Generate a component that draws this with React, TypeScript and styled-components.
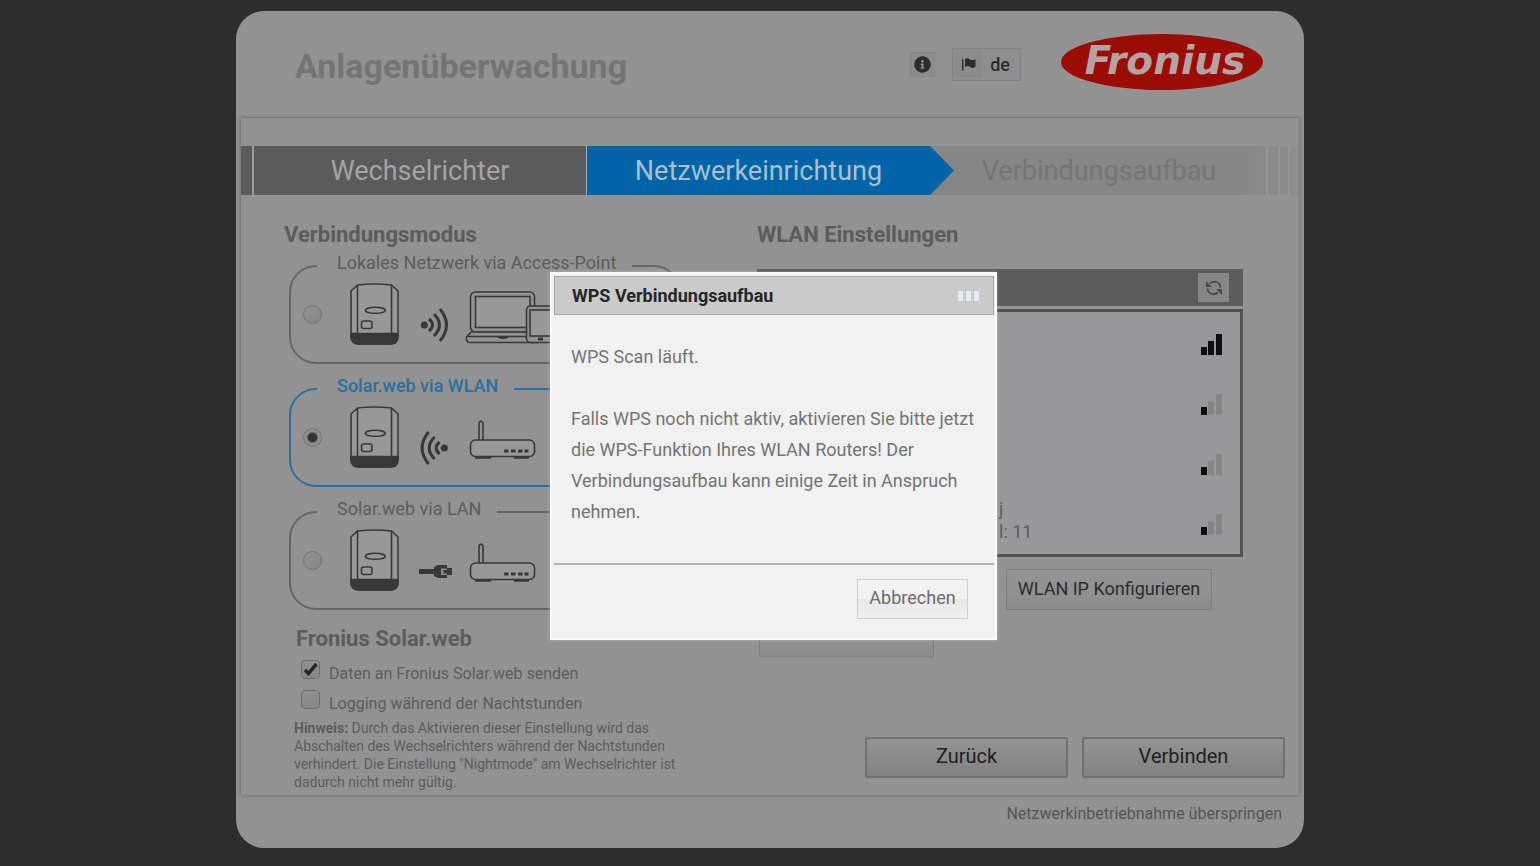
import React from "react";
import styled, { createGlobalStyle, css } from "styled-components";
import { FaInfoCircle } from "react-icons/fa";

const color = {
  page: "#2d2d2d",
  panel: "#929292",
  dark: "#5b5b5b",
  text: "#5c5c5c",
  line: "#666666",
  ink: "#383838",
  blue: "#0064a6",
  blueLine: "#28709f",
};

const GlobalStyle = createGlobalStyle`
  *, *::before, *::after { box-sizing: border-box; }
  body {
    margin: 0;
    background: ${color.page};
    color: ${color.text};
    font-family: Roboto, "Liberation Sans", sans-serif;
    font-size: 16px;
    line-height: 20px;
  }
  h1, h2, p { margin: 0; }
  button, input { font-family: inherit; margin: 0; }
`;

const Page = styled.div`
  position: relative;
  padding: 11px 16px 18px;
`;

const Panel = styled.main`
  max-width: 1068px;
  margin: 0 auto;
  padding: 0 5px;
  background: ${color.panel};
  border-radius: 28px;
`;

const Header = styled.header`
  display: flex;
  align-items: center;
  min-height: 107px;
  padding: 0 36px 0 54px;
`;

const Title = styled.h1`
  flex: 1;
  padding-top: 3px;
  color: #747474;
  font-size: 34px;
  line-height: 40px;
  font-weight: 700;
`;

const IconBox = styled.span`
  display: flex;
  align-items: center;
  justify-content: center;
  width: 25px;
  height: 25px;
  border: 1px solid #868686;
  background: #8c8c8c;
`;

const PlainButton = styled.button`
  display: flex;
  align-items: center;
  padding: 0;
  border: 0;
  background: none;
  color: #2c2c2c;
  font-size: 18px;
`;

const InfoButton = styled(PlainButton)`
  margin-right: 17px;
`;

const LanguageButton = styled(PlainButton)`
  gap: 9px;
  height: 33px;
  padding: 0 10px 0 3px;
  margin-right: 40px;
  border: 1px solid #828282;
  background: #8e8e8e;
  font-weight: 500;
`;

const LogoImage = styled.svg`
  margin-bottom: 5px;
`;

const Content = styled.section`
  padding-top: 28px;
  box-shadow: 0 0 4px rgba(0, 0, 0, 0.36);
`;

const Steps = styled.ol`
  display: grid;
  grid-template-columns: 11px 335fr 367fr 312fr 12px 10px 11px;
  height: 49px;
  margin: 0;
  padding: 0;
  list-style: none;
  background: linear-gradient(90deg, #868686 94%, #8e8e8e);
`;

type StepState = "done" | "current" | "next";

const Step = styled.li<{ $state: StepState }>`
  display: flex;
  align-items: center;
  justify-content: center;
  font-size: 27px;
  ${({ $state }) =>
    $state === "done" &&
    css`
      border-left: 2px solid #9a9a9a;
      border-right: 1px solid #a8a8a8;
      background: ${color.dark};
      color: #a4a4a4;
    `}
  ${({ $state }) =>
    $state === "current" &&
    css`
      padding-right: 24px;
      background: ${color.blue};
      color: #a9c0d0;
      clip-path: polygon(0 0, calc(100% - 24px) 0, 100% 50%, calc(100% - 24px) 100%, 0 100%);
    `}
  ${({ $state }) =>
    $state === "next" &&
    css`
      padding-right: 22px;
      color: #757575;
    `}
`;

const StepEdge = styled.li`
  background: ${color.dark};
`;

const StepTail = styled.li`
  border-left: 2px solid #959595;
`;

const Columns = styled.div`
  display: grid;
  grid-template-columns: minmax(0, 473fr) minmax(0, 528fr);
  padding: 25px 14px 4px 43px;
`;

const Heading = styled.h2<{ $indent?: number }>`
  padding-left: ${({ $indent }) => $indent ?? 0}px;
  font-size: 22px;
  line-height: 30px;
  font-weight: 700;
`;

const ModeList = styled.div`
  display: flex;
  flex-direction: column;
  gap: 12px;
  max-width: 392px;
  margin: 3px 0 14px 5px;
`;

const Mode = styled.fieldset<{ $active: boolean }>`
  min-width: 0;
  height: 111px;
  margin: 0;
  padding: 3px 0 0 12px;
  border: 2px solid ${({ $active }) => ($active ? color.blueLine : color.line)};
  border-radius: 27px;

  legend {
    margin-left: 14px;
    padding: 0 16px 6px 20px;
    color: ${({ $active }) => ($active ? color.blueLine : color.text)};
    font-size: 18px;
    line-height: 20px;
    ${({ $active }) => $active && "font-weight: 500;"}
  }
`;

const ModeBody = styled.div`
  display: flex;
  align-items: center;
  gap: 26px;
`;

const Radio = styled.input.attrs({ type: "radio" })`
  appearance: none;
  flex: none;
  width: 19px;
  height: 19px;
  border: 1px solid #727272;
  border-radius: 50%;
  background: linear-gradient(135deg, #939393, #848484);
  &:checked {
    background: radial-gradient(circle, #333 0 4px, #8f8f8f 6px);
  }
`;

const Checks = styled.div`
  display: flex;
  flex-direction: column;
  gap: 11px;
  padding: 6px 0 10px 17px;
`;

const CheckRow = styled.div`
  display: flex;
  align-items: flex-start;
  gap: 9px;
  height: 19px;
  label {
    padding-top: 4px;
  }
`;

const CheckHolder = styled.span`
  position: relative;
  display: flex;
  svg {
    position: absolute;
    inset: 0;
    pointer-events: none;
  }
`;

const Checkbox = styled.input.attrs({ type: "checkbox" })`
  appearance: none;
  width: 19px;
  height: 19px;
  border: 1px solid #6c6c6c;
  border-radius: 4px;
  background: linear-gradient(#919191, #868686);
`;

const Hint = styled.p`
  max-width: 410px;
  padding-left: 10px;
  font-size: 14px;
  line-height: 18px;
`;

const RightColumn = styled.div`
  display: flex;
  flex-direction: column;
`;

const Networks = styled.div`
  margin-right: 42px;
`;

const ListHead = styled.div`
  display: flex;
  align-items: center;
  justify-content: flex-end;
  height: 37px;
  margin: 19px 0 3px;
  padding-right: 14px;
  background: ${color.dark};
`;

const RefreshButton = styled(PlainButton)`
  justify-content: center;
  width: 31px;
  height: 29px;
  background: #868686;
`;

const NetworkList = styled.ul`
  margin: 0;
  padding: 2px 18px 0 239px;
  height: 248px;
  list-style: none;
  border: 3px solid #515153;
  background: #99989a;
`;

const Network = styled.li`
  display: flex;
  align-items: center;
  justify-content: space-between;
  height: 60px;
  font-size: 18px;
  line-height: 23px;
  p {
    padding-bottom: 8px;
  }
`;

const SoftButton = styled.button<{ $width: number }>`
  width: ${({ $width }) => $width}px;
  height: 41px;
  padding: 0 0 3px;
  border: 1px solid #808080;
  background: linear-gradient(#929292 50%, #8b8b8b);
  color: #2c2c2c;
  font-size: 18px;
`;

const ConfigButtons = styled.div`
  display: flex;
  flex-direction: column;
  gap: 6px;
  padding: 12px 31px 0 2px;
  ${SoftButton}:first-child {
    align-self: flex-end;
  }
`;

const Actions = styled.div`
  display: flex;
  justify-content: flex-end;
  gap: 14px;
  margin: auto 0 13px;
`;

const ActionButton = styled.button`
  width: 203px;
  height: 41px;
  padding: 0 0 4px;
  border: 2px solid #707070;
  border-radius: 2px;
  background: linear-gradient(#939393, #828282);
  color: #1f1f1f;
  font-size: 20px;
`;

const Footer = styled.footer`
  display: flex;
  justify-content: flex-end;
  padding: 9px 17px 24px;
  a {
    color: #555;
    text-decoration: none;
  }
`;

const Overlay = styled.div`
  position: absolute;
  inset: 0;
  display: flex;
  justify-content: center;
  align-items: flex-start;
  padding: 272px 0 0 7px;
`;

const Dialog = styled.div`
  width: 447px;
  padding: 4px 3px 4px 4px;
  background: #f2f1f2;
  box-shadow: inset 0 0 0 2px #fafafa, 0 0 3px rgba(255, 255, 255, 0.35);
`;

const DialogHead = styled.header`
  display: flex;
  align-items: center;
  justify-content: space-between;
  height: 39px;
  padding: 0 14px 0 17px;
  border: 1px solid #a6a6a6;
  background: #cbcbcb;
  color: #262626;
  h2 {
    font-size: 18px;
    font-weight: 700;
  }
`;

const Dots = styled.span`
  display: flex;
  gap: 3px;
  span {
    width: 5px;
    height: 10px;
    background: #e0f1f8;
  }
`;

const DialogBody = styled.div`
  height: 250px;
  padding: 26px 17px 0;
  border-bottom: 2px solid #b4b4b4;
  color: #747474;
  font-size: 18px;
  line-height: 31px;
  p + p {
    margin-top: 31px;
  }
`;

const DialogFoot = styled.footer`
  display: flex;
  justify-content: flex-end;
  padding: 14px 26px 17px;
`;

const CancelButton = styled.button`
  width: 111px;
  height: 40px;
  padding: 0 0 4px;
  border: 1px solid #cfcfcf;
  background: linear-gradient(#f3f2f3 50%, #e9e8e9 50%, #f1f0f1);
  color: #6c6c6c;
  font-size: 18px;
`;

function Logo() {
  return (
    <LogoImage width="202" height="57" viewBox="0 0 202 57" role="img" aria-label="Fronius">
      <ellipse cx="101" cy="28" rx="101" ry="28" fill="#9b0d04" />
      <text
        x="104"
        y="40"
        textAnchor="middle"
        fontFamily="DejaVu Sans, sans-serif"
        fontWeight="700"
        fontStyle="italic"
        fontSize="39"
        fill="#b5a3a3"
      >
        Fronius
      </text>
    </LogoImage>
  );
}

function FlagIcon() {
  return (
    <svg width="14" height="13" viewBox="0 0 14 13" fill="#2c2c2c" aria-hidden="true">
      <path d="M0 1H1.4V12.5H0Z" />
      <path d="M3 1.2C5 -.2 6.500 .2 8 1.500C9.600 2.600 11.500 2.300 13.500 1.200V8.800C11.500 10.300 9.600 10.300 8 9C6.500 7.800 5 7.800 3 9Z" />
    </svg>
  );
}

function RefreshIcon() {
  return (
    <svg width="18" height="16" viewBox="0 0 18 16" aria-hidden="true">
      <g fill="none" stroke="#4a4a4a" strokeWidth="2">
        <path d="M5 3.500C8.500 .5 15 1.500 15.500 7.500" />
        <path d="M13 12.500C9.500 15.500 3 14.500 2.500 8.500" />
      </g>
      <g fill="#4a4a4a">
        <path d="M1 1V7H7Z" />
        <path d="M17 15V9H11Z" />
      </g>
    </svg>
  );
}

function CheckMark() {
  return (
    <svg width="19" height="19" viewBox="0 0 19 19" aria-hidden="true">
      <path d="M4 10L7.500 13.500L15.500 4" fill="none" stroke="#262626" strokeWidth="3.500" />
    </svg>
  );
}

function Signal({ level }: { level: number }) {
  const bars = [
    { x: 0, h: 8 },
    { x: 7, h: 14 },
    { x: 15, h: 21 },
  ];
  return (
    <svg width="21" height="21" viewBox="0 0 21 21" role="img" aria-label={`Signal ${level}`}>
      {bars.map((bar, i) => (
        <rect key={bar.x} x={bar.x} y={21 - bar.h} width="6" height={bar.h} fill={i < level ? "#0e0e10" : "#858485"} />
      ))}
    </svg>
  );
}

function Inverter() {
  return (
    <g>
      <path d="M9.500 3Q26.500 1 43.500 3L50 9V54Q50 62 42 62H11Q3 62 3 54V9Z" fill="#989898" />
      <path d="M9.500 3V51M43.500 3V51" />
      <path d="M3 51.500H50V54Q50 62 42 62H11Q3 62 3 54Z" fill={color.ink} />
      <ellipse cx="27.300" cy="28.300" rx="10" ry="3" />
      <rect x="13.500" y="39" width="10.500" height="7.500" rx="2" />
    </g>
  );
}

function Waves() {
  return (
    <g strokeWidth="3">
      <circle cx="76.300" cy="43" r="3.600" fill={color.ink} stroke="none" />
      <path d="M81 37Q88 43 81 49" />
      <path d="M86 32Q97 43 86 54" />
      <path d="M92 27Q105 43 92 59" />
    </g>
  );
}

function Plug() {
  return (
    <g fill={color.ink} stroke="none">
      <path d="M71 41H86V39L90 37H99V40H104V47H99V50H90L86 48V46H71Z" />
      <path d="M93 40.500H99V42H95.500V45.500H99V47H93Z" fill="#8a8a8a" />
    </g>
  );
}

function Router() {
  return (
    <g>
      <path d="M131 35V18Q133 14 135 18V35" />
      <rect x="122.500" y="35" width="64" height="16.500" rx="5" fill="#989898" />
      <path d="M156 46H160.500M163 46H167.500M170 46H174.500M176.500 46H180.500" strokeWidth="3" />
      <path d="M127 52.500H143M166 52.500H181" strokeWidth="2.500" />
    </g>
  );
}

function Devices() {
  return (
    <g>
      <rect x="122.500" y="10" width="64" height="40" rx="5" />
      <rect x="127.500" y="14.500" width="54.500" height="31" fill="#989898" />
      <path d="M123 50L118.500 55Q118 60.500 122 60.500H190V50Z" fill={color.panel} />
      <path d="M120 54.500H180M149.500 54.500Q155 58 160.500 54.500" />
      <rect x="178.500" y="24" width="38" height="36.500" rx="4" fill={color.panel} />
      <rect x="182" y="28" width="31" height="26" fill="#989898" />
      <path d="M190 57H195" strokeWidth="3" />
    </g>
  );
}

type ModeKind = "ap" | "wlan" | "lan";

function ModeDrawing({ kind }: { kind: ModeKind }) {
  return (
    <svg width="220" height="65" viewBox="0 0 220 65" fill="none" stroke={color.ink} strokeWidth="1.600" aria-hidden="true">
      <Inverter />
      {kind === "ap" && <Waves />}
      {kind === "wlan" && (
        <g transform="translate(172.600 0) scale(-1 1)">
          <Waves />
        </g>
      )}
      {kind === "lan" && <Plug />}
      {kind === "ap" ? <Devices /> : <Router />}
    </svg>
  );
}

const modes: { kind: ModeKind; label: string }[] = [
  { kind: "ap", label: "Lokales Netzwerk via Access-Point" },
  { kind: "wlan", label: "Solar.web via WLAN" },
  { kind: "lan", label: "Solar.web via LAN" },
];

const networks = [
  { level: 3, name: "", channel: "" },
  { level: 1, name: "", channel: "" },
  { level: 1, name: "", channel: "" },
  { level: 1, name: "j", channel: "l: 11" },
];

export default function App() {
  const [mode, setMode] = React.useState<ModeKind>("wlan");
  const [send, setSend] = React.useState(true);
  const [logging, setLogging] = React.useState(false);

  return (
    <Page>
      <GlobalStyle />
      <Panel>
        <Header>
          <Title>Anlagenüberwachung</Title>
          <InfoButton type="button" aria-label="Information">
            <IconBox>
              <FaInfoCircle size={17} />
            </IconBox>
          </InfoButton>
          <LanguageButton type="button">
            <IconBox>
              <FlagIcon />
            </IconBox>
            de
          </LanguageButton>
          <Logo />
        </Header>

        <Content>
          <Steps>
            <StepEdge />
            <Step $state="done">Wechselrichter</Step>
            <Step $state="current">Netzwerkeinrichtung</Step>
            <Step $state="next">Verbindungsaufbau</Step>
            <StepTail />
            <StepTail />
            <StepTail />
          </Steps>

          <Columns>
            <div>
              <Heading>Verbindungsmodus</Heading>
              <ModeList>
                {modes.map(({ kind, label }) => (
                  <Mode key={kind} $active={kind === mode}>
                    <legend>
                      <label htmlFor={kind}>{label}</label>
                    </legend>
                    <ModeBody>
                      <Radio id={kind} name="mode" checked={kind === mode} onChange={() => setMode(kind)} />
                      <ModeDrawing kind={kind} />
                    </ModeBody>
                  </Mode>
                ))}
              </ModeList>

              <Heading $indent={12}>Fronius Solar.web</Heading>
              <Checks>
                <CheckRow>
                  <CheckHolder>
                    <Checkbox id="send" checked={send} onChange={() => setSend(!send)} />
                    {send && <CheckMark />}
                  </CheckHolder>
                  <label htmlFor="send">Daten an Fronius Solar.web senden</label>
                </CheckRow>
                <CheckRow>
                  <CheckHolder>
                    <Checkbox id="logging" checked={logging} onChange={() => setLogging(!logging)} />
                    {logging && <CheckMark />}
                  </CheckHolder>
                  <label htmlFor="logging">Logging während der Nachtstunden</label>
                </CheckRow>
              </Checks>
              <Hint>
                <b>Hinweis:</b> Durch das Aktivieren dieser Einstellung wird das Abschalten des Wechselrichters während
                der Nachtstunden verhindert. Die Einstellung "Nightmode" am Wechselrichter ist dadurch nicht mehr
                gültig.
              </Hint>
            </div>

            <RightColumn>
              <Heading>WLAN Einstellungen</Heading>
              <Networks>
                <ListHead>
                  <RefreshButton type="button" aria-label="Aktualisieren">
                    <RefreshIcon />
                  </RefreshButton>
                </ListHead>
                <NetworkList>
                  {networks.map((network, i) => (
                    <Network key={i}>
                      <p>
                        {network.name}
                        <br />
                        {network.channel}
                      </p>
                      <Signal level={network.level} />
                    </Network>
                  ))}
                </NetworkList>
                <ConfigButtons>
                  <SoftButton type="button" $width={206}>
                    WLAN IP Konfigurieren
                  </SoftButton>
                  <SoftButton type="button" $width={175} aria-label="WPS" />
                </ConfigButtons>
              </Networks>
              <Actions>
                <ActionButton type="button">Zurück</ActionButton>
                <ActionButton type="button">Verbinden</ActionButton>
              </Actions>
            </RightColumn>
          </Columns>
        </Content>

        <Footer>
          <a href="#skip">Netzwerkinbetriebnahme überspringen</a>
        </Footer>
      </Panel>

      <Overlay>
        <Dialog role="dialog" aria-modal="true" aria-labelledby="dialog-title">
          <DialogHead>
            <h2 id="dialog-title">WPS Verbindungsaufbau</h2>
            <Dots aria-hidden="true">
              <span />
              <span />
              <span />
            </Dots>
          </DialogHead>
          <DialogBody>
            <p>WPS Scan läuft.</p>
            <p>
              Falls WPS noch nicht aktiv, aktivieren Sie bitte jetzt die WPS-Funktion Ihres WLAN Routers! Der
              Verbindungsaufbau kann einige Zeit in Anspruch nehmen.
            </p>
          </DialogBody>
          <DialogFoot>
            <CancelButton type="button">Abbrechen</CancelButton>
          </DialogFoot>
        </Dialog>
      </Overlay>
    </Page>
  );
}
